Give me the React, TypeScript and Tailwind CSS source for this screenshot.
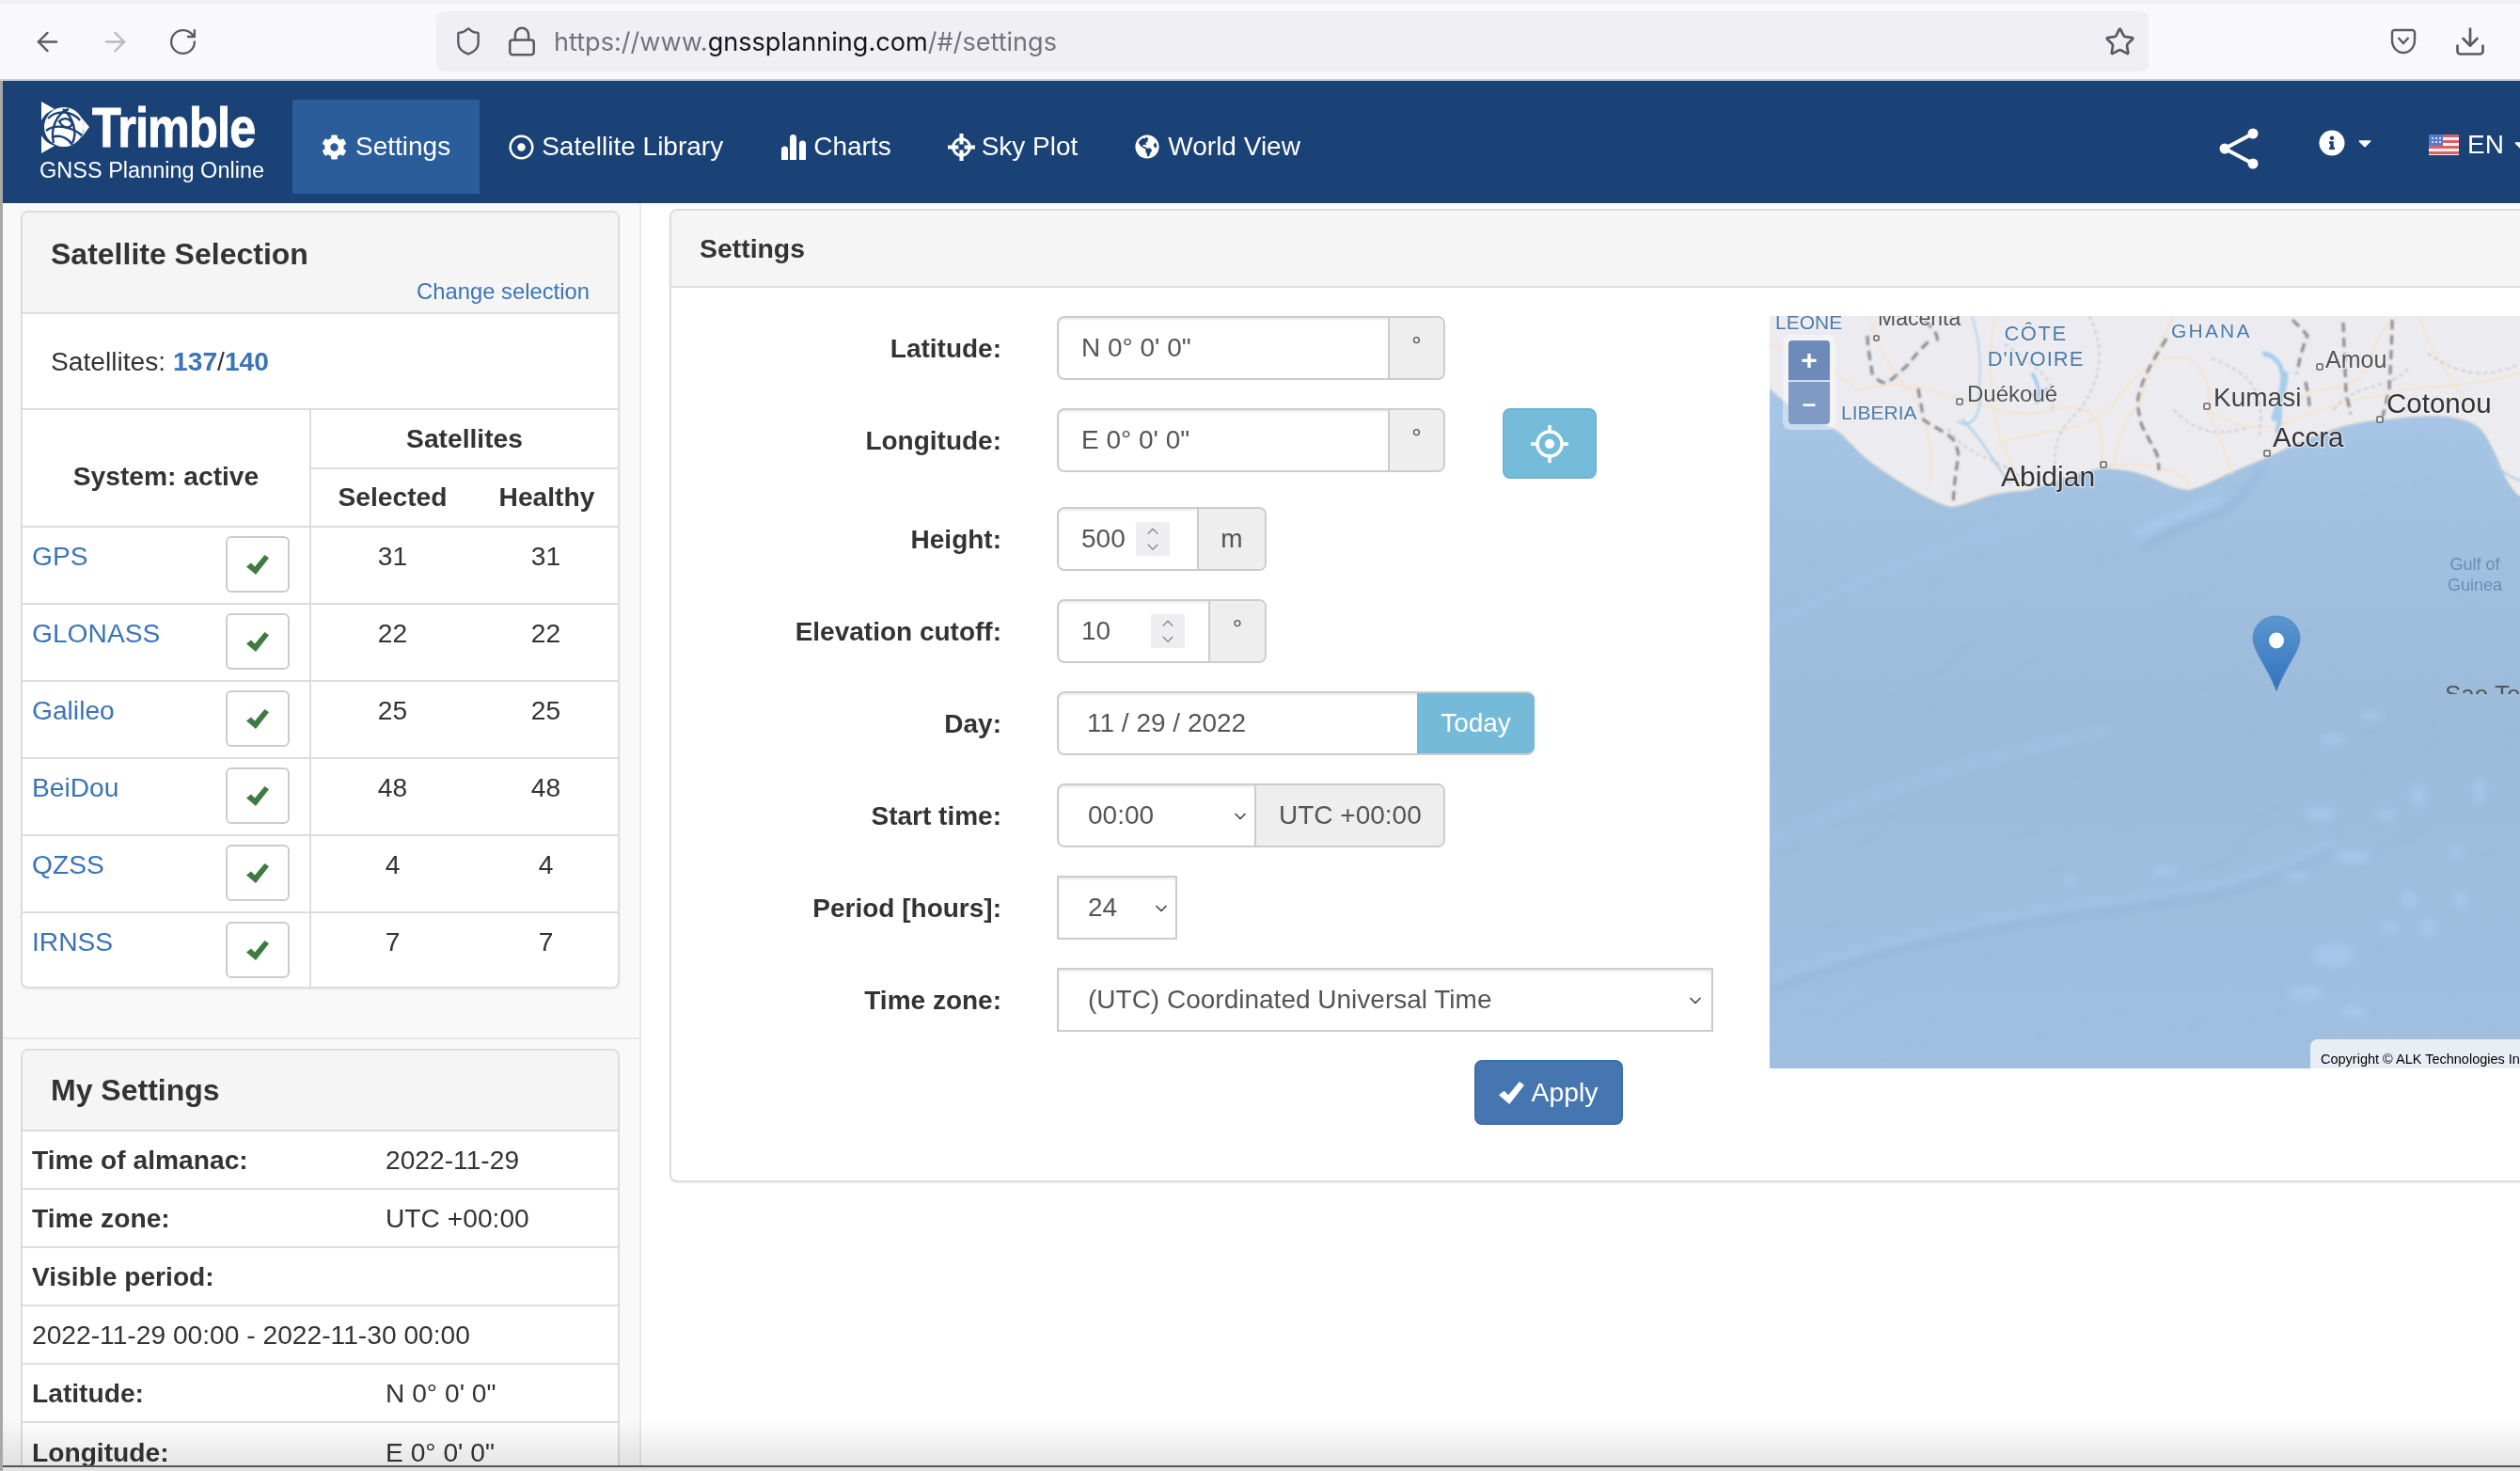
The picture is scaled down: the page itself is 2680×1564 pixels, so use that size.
import React from 'react';
import { ArrowLeft, ArrowRight, RotateCw, Shield, Lock, Star, Download, ChevronUp, ChevronDown } from 'lucide-react';
import { FaCog, FaRegDotCircle, FaGlobeAmericas, FaInfoCircle, FaCaretDown } from 'react-icons/fa';

const systems = [
  { name: 'GPS', selected: 31, healthy: 31 },
  { name: 'GLONASS', selected: 22, healthy: 22 },
  { name: 'Galileo', selected: 25, healthy: 25 },
  { name: 'BeiDou', selected: 48, healthy: 48 },
  { name: 'QZSS', selected: 4, healthy: 4 },
  { name: 'IRNSS', selected: 7, healthy: 7 },
];

const mySettings: { label?: string; value: string; full?: boolean }[] = [
  { label: 'Time of almanac:', value: '2022-11-29' },
  { label: 'Time zone:', value: 'UTC +00:00' },
  { label: 'Visible period:', value: '' },
  { value: '2022-11-29 00:00 - 2022-11-30 00:00', full: true },
  { label: 'Latitude:', value: 'N 0° 0\' 0"' },
  { label: 'Longitude:', value: 'E 0° 0\' 0"' },
];

const ChartsIcon = () => (
  <svg width="27" height="27" viewBox="0 0 27 27" fill="white">
    <path d="M0 16a3.5 3.5 0 0 1 7 0v11H0zM9 3.5a3.5 3.5 0 0 1 7 0V27H9zM19 10a3.5 3.5 0 0 1 7 0v17h-7z" />
  </svg>
);

const SkyPlotIcon = () => (
  <svg width="29" height="29" viewBox="0 0 28 28" fill="none" stroke="white" className="shrink-0">
    <circle cx="14" cy="14" r="8.5" strokeWidth="3" />
    <path d="M14 0v11M14 17v11M0 14h11M17 14h11" strokeWidth="4" />
  </svg>
);

const CheckMark = ({ className, width, height }: { className: string; width: number; height: number }) => (
  <svg width={width} height={height} viewBox="0 0 24 21" preserveAspectRatio="none" className={className} fill="currentColor">
    <path d="M0 12.5 L5 8.5 L9 12.5 L19.5 0 L24 3.2 L10 21 Z" />
  </svg>
);

const TrimbleMark = () => (
  <svg width="54" height="56" viewBox="0 0 54 56" className="shrink-0">
    <path d="M1 0 L15 8 A24 24 0 0 0 1 20 Z M52 27 L42 15 A22 22 0 0 1 43 39 Z M1 55 L1 36 A24 24 0 0 0 15 47 Z" fill="white" />
    <circle cx="25" cy="27" r="21" fill="white" />
    <g fill="none" stroke="#1a4276" strokeWidth="2.4">
      <path d="M8 18 C18 8 34 10 42 20" />
      <path d="M6 31 C16 23 34 27 44 36" />
      <path d="M14 44 C10 28 18 12 30 8" />
      <path d="M34 44 C40 32 34 16 24 8" />
      <path d="M12 38 C22 34 30 40 34 46" />
      <path d="M20 21 C25 16 32 18 34 24 C30 30 24 28 20 21 Z" />
    </g>
  </svg>
);

const UsFlag = () => (
  <svg width="32" height="22" viewBox="0 0 32 22" className="shrink-0">
    <rect width="32" height="22" fill="#f4f1f2" />
    <g fill="#dd5f5f">
      <rect width="32" height="3" />
      <rect y="6" width="32" height="3" />
      <rect y="12" width="32" height="3" />
      <rect y="18" width="32" height="3" />
    </g>
    <rect width="15" height="12" fill="#5a77d0" />
    <g fill="#d6def5">
      <rect x="3" y="3" width="2" height="2" />
      <rect x="7" y="3" width="2" height="2" />
      <rect x="11" y="3" width="2" height="2" />
      <rect x="3" y="7" width="2" height="2" />
      <rect x="7" y="7" width="2" height="2" />
      <rect x="11" y="7" width="2" height="2" />
    </g>
  </svg>
);

const Spinner = ({ className }: { className: string }) => (
  <div className={`flex flex-col items-center justify-center w-9 h-9 bg-[#eeeef1] text-[#8f8f9d] shrink-0 ${className}`}>
    <ChevronUp size={20} strokeWidth={1.8} className="-mb-[3px]" />
    <ChevronDown size={20} strokeWidth={1.8} />
  </div>
);

const Addon = ({ children, className }: { children: React.ReactNode; className: string }) => (
  <div className={`flex bg-[#eeeeee] border-l-2 border-[#cccccc] ${className}`}>{children}</div>
);

const FormRow = ({ label, children }: { label: string; children: React.ReactNode }) => (
  <div className="flex items-start mb-[30px]">
    <div className="w-[351px] h-[68px] pt-[2px] flex items-center justify-end font-bold text-[#333] text-[28px]">{label}</div>
    <div className="ml-[59px]">{children}</div>
  </div>
);

const inputBox = 'flex h-[68px] border-2 border-[#cccccc] rounded-lg bg-white text-[#555] text-[28px] overflow-hidden shadow-[inset_0_2px_2px_rgba(0,0,0,0.08)]';

const MapLabel = ({ x, y, size, color = '#333', anchor = 'start', spacing = 0, children }: { x: number; y: number; size: number; color?: string; anchor?: 'start' | 'middle'; spacing?: number; children: string }) => (
  <text x={x} y={y} fontSize={size} fill={color} textAnchor={anchor} letterSpacing={spacing} stroke="rgba(240,240,245,0.7)" strokeWidth="2.5" paintOrder="stroke">{children}</text>
);

const coast = 'M0 76 C15 90 28 100 40 107 C55 112 64 116 76 124 C92 140 102 152 117 161 C132 172 146 180 158 187 C172 194 185 202 195 202 C208 200 220 194 231 191 C246 186 262 186 277 184 C302 176 330 164 355 161 C372 162 388 164 401 169 C416 174 430 184 445 184 C458 182 468 176 479 171 C498 162 514 156 530 149 C558 136 582 124 608 117 C626 112 642 110 659 109 C682 106 706 104 727 107 C742 110 752 114 758 121 C770 138 776 154 783 171 C788 180 792 186 798 191';

// light seamount patches in the lower right of the ocean
const seamounts = [
  [600, 450, 14, 6], [640, 425, 12, 5], [585, 530, 16, 7], [620, 575, 20, 7], [560, 595, 14, 5],
  [655, 530, 10, 6], [690, 510, 8, 12], [755, 505, 6, 14], [730, 570, 8, 6], [680, 620, 9, 8],
  [700, 650, 8, 10], [600, 680, 22, 12], [570, 720, 18, 8], [620, 740, 14, 7], [660, 650, 10, 6],
  [735, 620, 7, 10], [420, 590, 14, 5], [320, 600, 8, 5],
];

const MapCanvas = () => (
  <svg width="798" height="800" viewBox="0 0 798 800" className="absolute inset-0">
    <defs>
      <linearGradient id="sea" x1="0" y1="0" x2="0" y2="1">
        <stop offset="0" stopColor="#a0c4ea" />
        <stop offset="0.3" stopColor="#94b7db" />
        <stop offset="0.55" stopColor="#90b3d7" />
        <stop offset="1" stopColor="#93b7dd" />
      </linearGradient>
      <linearGradient id="pin" x1="0" y1="0" x2="0" y2="1">
        <stop offset="0" stopColor="#5a96d0" />
        <stop offset="1" stopColor="#3372bd" />
      </linearGradient>
      <filter id="relief" x="0" y="0" width="100%" height="100%">
        <feTurbulence type="fractalNoise" baseFrequency="0.006 0.016" numOctaves="4" seed="11" />
        <feDiffuseLighting surfaceScale="5" lightingColor="white" diffuseConstant="1.1">
          <feDistantLight azimuth="225" elevation="65" />
        </feDiffuseLighting>
      </filter>
      <filter id="soft"><feGaussianBlur stdDeviation="0.8" /></filter>
      <filter id="softer"><feGaussianBlur stdDeviation="4" /></filter>
      <clipPath id="saoClip"><rect x="700" y="380" width="98" height="22" /></clipPath>
      <clipPath id="seaClip"><path d={`${coast} L798 800 L0 800 Z`} /></clipPath>
    </defs>
    <rect width="798" height="800" fill="url(#sea)" />
    <g clipPath="url(#seaClip)">
      <rect x="-300" y="-300" width="1400" height="1400" filter="url(#relief)" opacity="0.12" transform="rotate(-22 399 400)" style={{ mixBlendMode: 'multiply' }} />
      <g filter="url(#softer)" fill="none" strokeLinecap="round" opacity="0.75">
        <path d="M401 244 C430 226 460 216 484 207 C500 196 515 178 525 160" stroke="#7f9fc4" strokeWidth="2.5" />
        <path d="M392 232 C425 214 455 204 476 196" stroke="#a9cbee" strokeWidth="10" />
        <path d="M0 717 C100 680 210 655 308 641 C380 630 430 625 484 614 C530 600 565 588 597 571" stroke="#86a7cb" strokeWidth="2.5" />
        <path d="M0 705 C100 668 210 643 308 628 C380 618 430 612 484 602 C530 588 565 576 597 558" stroke="#a5c7ea" strokeWidth="5" />
        <path d="M0 560 C120 500 220 470 360 440 M0 330 C90 280 190 240 270 225" stroke="#a2c4e8" strokeWidth="6" />
      </g>
      <g filter="url(#softer)" fill="#a9cbef" opacity="0.7">
        {seamounts.map(([cx, cy, rx, ry]) => (
          <ellipse key={`${cx}-${cy}`} cx={cx} cy={cy} rx={rx} ry={ry} />
        ))}
      </g>
    </g>
    <path d={`${coast} L798 0 L0 0 Z`} fill="#ecebf0" />
    <g filter="url(#soft)">
      <path d={coast} fill="none" stroke="#f2e6d8" strokeWidth="2" />
      <g fill="none" stroke="#f6e3c9" strokeWidth="2">
        <path d="M0 30 C40 40 70 58 95 80 C120 70 150 70 190 85 C240 100 270 110 300 100 C340 90 360 105 352 160" />
        <path d="M105 0 C118 40 130 60 150 80 C170 110 175 150 170 180" />
        <path d="M240 0 C230 50 235 90 245 130 C260 160 262 170 268 184" />
        <path d="M245 135 C290 120 330 125 360 100 C390 60 410 40 445 45 C470 60 470 95 465 100 C490 115 510 120 540 118" />
        <path d="M355 160 C410 150 450 170 445 184 M465 100 C480 130 490 160 492 168" />
        <path d="M540 118 C580 100 610 90 650 85 C690 70 740 80 798 60 M530 148 C536 130 540 125 545 112" />
        <path d="M690 0 C700 30 720 60 745 100 M430 0 C412 30 400 60 395 90 C378 110 370 130 365 160" />
        <path d="M560 90 C590 70 620 85 640 50 C640 30 650 15 670 0" />
      </g>
      <g fill="none" stroke="#b2b2b6" strokeWidth="1.2" strokeDasharray="4 4">
        <path d="M340 0 C360 40 350 80 320 110 C300 130 300 160 310 178" />
        <path d="M250 30 C280 50 310 70 300 100 M470 45 C510 60 530 80 520 130" />
        <path d="M700 40 C730 60 760 70 798 50 M600 100 C620 70 660 80 680 55" />
        <path d="M430 100 C450 120 470 130 510 118 M190 120 C210 150 240 150 265 170" />
      </g>
      <g fill="none" stroke="#85858a" strokeWidth="3" strokeDasharray="10 6">
        <path d="M104 21 C104 35 108 50 109 61 C114 68 120 72 125 71 C132 66 140 58 148 51 C154 42 162 34 169 27" />
        <path d="M158 77 C160 90 162 100 164 111 C175 118 188 124 195 131 C200 140 202 148 200 154 C197 170 196 185 195 201" />
        <path d="M422 24 C412 40 405 52 401 61 C394 76 392 84 391 94 C393 104 394 110 396 117 C403 130 408 140 412 147 C413 154 414 160 414 164" />
        <path d="M556 4 C562 10 568 16 572 21 C566 35 563 48 561 61 M570 70 C572 80 574 90 574 96" />
        <path d="M610 7 C611 35 612 60 613 81 C615 92 617 98 618 104" />
        <path d="M662 4 C662 30 660 55 659 77 C656 90 654 98 652 107" />
        <path d="M165 5 C175 14 180 20 178 30" />
      </g>
      <g fill="none" stroke="#a8cdea" strokeLinecap="round">
        <path d="M526 40 C545 45 548 60 544 80 C540 95 545 105 540 122" strokeWidth="5" />
        <path d="M548 62 C548 80 540 95 537 108" strokeWidth="7" />
        <path d="M280 62 C285 72 288 80 284 92 M295 78 C288 82 282 84 278 84" strokeWidth="4" />
        <path d="M224 90 C222 110 212 120 200 112 M205 110 C225 130 235 150 255 178" strokeWidth="2" />
        <path d="M215 0 C225 30 225 55 222 90" strokeWidth="1.5" />
        <path d="M768 150 C775 165 785 170 798 175" strokeWidth="2" />
      </g>
    </g>
    <g fontFamily="'Liberation Sans', Arial, sans-serif">
      <MapLabel x={6} y={14} size={21} color="#4d7da6">LEONE</MapLabel>
      <MapLabel x={115} y={10} size={23} color="#555">Macenta</MapLabel>
      <MapLabel x={283} y={26} size={22} color="#4d7da6" anchor="middle" spacing={1.5}>CÔTE</MapLabel>
      <MapLabel x={283} y={53} size={22} color="#4d7da6" anchor="middle" spacing={1}>D'IVOIRE</MapLabel>
      <MapLabel x={427} y={23} size={21} color="#4d7da6" spacing={2.2}>GHANA</MapLabel>
      <MapLabel x={76} y={110} size={21} color="#4d7da6">LIBERIA</MapLabel>
      <MapLabel x={591} y={55} size={25} color="#555">Amou</MapLabel>
      <MapLabel x={210} y={91} size={24} color="#555">Duékoué</MapLabel>
      <MapLabel x={472} y={96} size={28} color="#444">Kumasi</MapLabel>
      <MapLabel x={656} y={103} size={29.5}>Cotonou</MapLabel>
      <MapLabel x={535} y={139} size={29.5}>Accra</MapLabel>
      <MapLabel x={246} y={181} size={30}>Abidjan</MapLabel>
      <text x={750} y={270} fontSize={18} fill="#6f8db5" textAnchor="middle">Gulf of</text>
      <text x={750} y={292} fontSize={18} fill="#6f8db5" textAnchor="middle">Guinea</text>
      <text x={718} y={411} fontSize={26} fill="#555" clipPath="url(#saoClip)">Sao Tome</text>
    </g>
    <g fill="#f2f2f2" stroke="#666" strokeWidth="1.6">
      <rect x="111" y="21" width="5" height="5" rx="1" />
      <rect x="582" y="51" width="6" height="6" rx="1" />
      <rect x="199" y="88" width="6" height="6" rx="1" />
      <rect x="462" y="93" width="6" height="6" rx="1" />
      <rect x="646" y="107" width="6" height="6" rx="1" />
      <rect x="526" y="143" width="6" height="6" rx="1" />
      <rect x="352" y="155" width="6" height="6" rx="1" />
    </g>
    <path d="M539 399 C530 374 514 356 514 343 C514 329 525 319 539 319 C553 319 564 329 564 343 C564 356 548 374 539 399 Z" fill="url(#pin)" stroke="#5b8fc2" strokeWidth="1" />
    <ellipse cx="539" cy="345" rx="8" ry="8.5" fill="white" />
  </svg>
);

const App: React.FC = () => {
  return (
    <div className="relative w-[2680px] h-[1564px] overflow-hidden bg-white flex flex-col font-['Liberation_Sans',Arial,sans-serif] text-[28.2px] text-[#333]">
      {/* Browser toolbar */}
      <div className="h-[86px] shrink-0 pt-1 bg-[#f0f0f4]">
        <div className="h-[80px] bg-[#f9f9fb] flex items-center pl-[34px]">
          <ArrowLeft size={33} strokeWidth={1.7} className="text-[#5b5b66]" />
          <ArrowRight size={33} strokeWidth={1.7} className="ml-[39px] text-[#b9b9c0]" />
          <RotateCw size={33} strokeWidth={1.7} className="ml-[39px] text-[#5b5b66]" />
          <div className="ml-[253px] w-[1821px] h-[64px] rounded-lg bg-[#f0f0f4] flex items-center pl-[18px] font-['Inter',sans-serif] text-[27.1px]">
            <Shield size={32} strokeWidth={1.8} className="text-[#5b5b66]" />
            <Lock size={34} strokeWidth={1.8} className="ml-[24px] text-[#5b5b66]" />
            <div className="ml-[17px] mt-[3px] text-[#73737c]">https://www.<span className="text-[#15141a]">gnssplanning.com</span>/#/settings</div>
            <Star size={33} strokeWidth={2} className="ml-auto mr-[14px] text-[#5b5b66]" />
          </div>
          <svg width="28" height="28" viewBox="0 0 28 28" fill="none" stroke="#5b5b66" strokeWidth="2.4" className="ml-[257px]">
            <path d="M2 4.5 A2.5 2.5 0 0 1 4.5 2 H23.5 A2.5 2.5 0 0 1 26 4.5 V13 A12 13 0 0 1 2 13 Z" />
            <path d="M8.5 10 L14 16 L19.5 10" />
          </svg>
          <Download size={36} strokeWidth={1.8} className="ml-[39px] text-[#5b5b66]" />
        </div>
        <div className="h-0.5 bg-[#cfcfd6]" />
      </div>

      {/* Navbar */}
      <nav className="h-[130px] shrink-0 bg-[#1a4276] flex items-center pl-[43px] pt-[10px] text-white text-[28px]">
        <div className="w-[268px] shrink-0 -mt-[13px]">
          <div className="flex items-center h-[62px]">
            <TrimbleMark />
            <div className="ml-[1px] font-bold text-[60px] leading-none scale-x-[0.84] origin-left tracking-[-1px] [-webkit-text-stroke:1px_white]">Trimble</div>
          </div>
          <div className="text-[23.5px] leading-[28px] whitespace-nowrap -ml-[1px]">GNSS Planning Online</div>
        </div>
        <div className="flex items-center h-[100px] px-[31px] bg-[#2a5d99] gap-[9px]">
          <FaCog size={27} /><span>Settings</span>
        </div>
        <div className="flex items-center h-[100px] px-[31px] gap-[8px]">
          <FaRegDotCircle size={27} /><span>Satellite Library</span>
        </div>
        <div className="flex items-center h-[100px] px-[31px] gap-[7px]">
          <ChartsIcon /><span>Charts</span>
        </div>
        <div className="flex items-center h-[100px] pl-[29px] pr-[31px] gap-[7px]">
          <SkyPlotIcon /><span>Sky Plot</span>
        </div>
        <div className="flex items-center h-[100px] pl-[30px] pr-[31px] gap-[9px]">
          <FaGlobeAmericas size={26} /><span>World View</span>
        </div>
        <svg width="44" height="44" viewBox="0 0 44 44" fill="white" stroke="white" strokeWidth="4" className="ml-auto mt-1">
          <path d="M37 6 L7 22 L37 38" fill="none" />
          <circle cx="37" cy="6" r="3.5" /><circle cx="7" cy="22" r="3.5" /><circle cx="37" cy="38" r="3.5" />
        </svg>
        <div className="ml-[63px] flex items-center -mt-[8px]">
          <FaInfoCircle size={28} />
          <FaCaretDown size={22} className="ml-[10px]" />
        </div>
        <div className="ml-[57px] flex items-center gap-[9px] -mt-[5px] shrink-0 w-[97px]">
          <UsFlag />
          <span>EN</span>
          <FaCaretDown size={22} className="shrink-0 -ml-[2px]" />
        </div>
      </nav>

      <div className="flex flex-1 min-h-0">
        {/* Left column */}
        <aside className="w-[682px] shrink-0 bg-[#f9f9f9] border-r-2 border-[#e8e8e8]">
          <div className="pt-2 pl-[22px] pr-[21px] pb-[52px] border-b-2 border-[#e8e8e8]">
            <div className="border-2 border-[#dddddd] rounded-lg bg-white overflow-hidden shadow-[0_1px_2px_rgba(0,0,0,0.08)]">
              <div className="h-[108px] bg-[#f5f5f5] border-b-2 border-[#dddddd] px-[30px] relative">
                <div className="pt-[26px] text-[32px] font-bold leading-[36px]">Satellite Selection</div>
                <div className="absolute right-[30px] top-[70px] text-[23.8px] leading-[28px] text-[#3b74b6]">Change selection</div>
              </div>
              <div className="h-[102px] flex items-center px-[30px] border-b-2 border-[#dddddd]">
                Satellites:&nbsp;<b className="text-[#3b74b6]">137</b>/<b className="text-[#3b74b6]">140</b>
              </div>
              <table className="w-full border-collapse table-fixed">
                <colgroup>
                  <col className="w-[306px]" />
                  <col className="w-[174px]" />
                  <col />
                </colgroup>
                <thead>
                  <tr className="h-[62px]">
                    <th rowSpan={2} className="border-r-2 border-b-2 border-[#dddddd] font-bold pt-[18px]">System: active</th>
                    <th colSpan={2} className="border-b-2 border-[#dddddd] font-bold">Satellites</th>
                  </tr>
                  <tr className="h-[62px]">
                    <th className="border-b-2 border-[#dddddd] font-bold pb-[2px]">Selected</th>
                    <th className="border-b-2 border-[#dddddd] font-bold pl-[2px] pb-[2px]">Healthy</th>
                  </tr>
                </thead>
                <tbody>
                  {systems.map((s, i) => (
                    <tr key={s.name} className={i < systems.length - 1 ? 'h-[82px] border-b-2 border-[#dddddd]' : 'h-[79px]'}>
                      <td className="border-r-2 border-[#dddddd] align-top p-0">
                        <div className="flex justify-between pl-[10px] pr-[21px]">
                          <span className="text-[#3b74b6] pt-[13px] leading-[34px]">{s.name}</span>
                          <div className="mt-[9px] w-[68px] h-[60px] border-2 border-[#cccccc] rounded-md bg-white flex items-center justify-center">
                            <CheckMark width={24} height={21} className="text-[#3e7b41]" />
                          </div>
                        </div>
                      </td>
                      <td className="align-top text-center pt-[13px] leading-[34px]">{s.selected}</td>
                      <td className="align-top text-center pt-[13px] leading-[34px]">{s.healthy}</td>
                    </tr>
                  ))}
                </tbody>
              </table>
            </div>
          </div>
          <div className="pt-[10px] pl-[22px] pr-[21px]">
            <div className="border-2 border-b-0 border-[#dddddd] rounded-t-lg bg-white overflow-hidden">
              <div className="h-[86px] bg-[#f5f5f5] border-b-2 border-[#dddddd] px-[30px] flex items-center text-[32px] font-bold">My Settings</div>
              {mySettings.map((r, i) => (
                <div key={i} className={`h-[62px] flex items-center pl-[10px] ${i < mySettings.length - 1 ? 'border-b-2 border-[#dddddd]' : ''}`}>
                  {r.full ? (
                    <span>{r.value}</span>
                  ) : (
                    <>
                      <b className="w-[376px] shrink-0">{r.label}</b>
                      <span>{r.value}</span>
                    </>
                  )}
                </div>
              ))}
            </div>
          </div>
        </aside>

        {/* Settings panel */}
        <main className="flex-1 min-w-0 pl-[30px] pt-[6px]">
          <div className="w-[2200px] h-[1035px] border-2 border-[#dddddd] rounded-lg bg-white shadow-[0_1px_2px_rgba(0,0,0,0.08)]">
            <div className="h-[82px] bg-[#f5f5f5] border-b-2 border-[#dddddd] rounded-t-lg flex items-center pl-[30px] font-bold text-[28.4px]">Settings</div>
            <div className="flex pt-[30px]">
              <div className="w-[1168px] shrink-0">
                <FormRow label="Latitude:">
                  <div className={`${inputBox} w-[413px]`}>
                    <div className="w-[350px] flex items-center pl-[24px]">N 0° 0' 0"</div>
                    <Addon className="flex-1 justify-center pt-[10px] text-[26px]">°</Addon>
                  </div>
                </FormRow>
                <FormRow label="Longitude:">
                  <div className="flex items-start">
                    <div className={`${inputBox} w-[413px]`}>
                      <div className="w-[350px] flex items-center pl-[24px]">E 0° 0' 0"</div>
                      <Addon className="flex-1 justify-center pt-[10px] text-[26px]">°</Addon>
                    </div>
                    <button className="ml-[61px] w-[100px] h-[75px] rounded-lg bg-[#74bcda] border-2 border-[#6bb4d3] flex items-center justify-center">
                      <svg width="42" height="42" viewBox="0 0 42 42" fill="none" stroke="white" strokeWidth="3.5">
                        <circle cx="21" cy="21" r="13" />
                        <circle cx="21" cy="21" r="5" fill="white" stroke="none" />
                        <path d="M21 1v8M21 33v8M1 21h8M33 21h8" />
                      </svg>
                    </button>
                  </div>
                </FormRow>
                <FormRow label="Height:">
                  <div className={`${inputBox} w-[223px]`}>
                    <div className="w-[147px] flex items-center pl-[24px]"><span>500</span><Spinner className="ml-[11px]" /></div>
                    <Addon className="flex-1 items-center justify-center">m</Addon>
                  </div>
                </FormRow>
                <FormRow label="Elevation cutoff:">
                  <div className={`${inputBox} w-[223px]`}>
                    <div className="w-[159px] flex items-center pl-[24px]"><span>10</span><Spinner className="ml-[43px]" /></div>
                    <Addon className="flex-1 justify-center pt-[10px] text-[26px]">°</Addon>
                  </div>
                </FormRow>
                <FormRow label="Day:">
                  <div className={`${inputBox} w-[508px] border-r-0`}>
                    <div className="w-[381px] flex items-center pl-[30px]">11 / 29 / 2022</div>
                    <div className="flex-1 -my-[2px] bg-[#75bbd9] text-white flex items-center justify-center">Today</div>
                  </div>
                </FormRow>
                <FormRow label="Start time:">
                  <div className={`${inputBox} w-[413px]`}>
                    <div className="w-[208px] flex items-center pl-[31px] relative">00:00
                      <ChevronDown size={20} strokeWidth={2} className="absolute right-[5px] top-[23px] text-[#444]" />
                    </div>
                    <Addon className="flex-1 items-center pl-[24px]">UTC +00:00</Addon>
                  </div>
                </FormRow>
                <FormRow label="Period [hours]:">
                  <div className="relative flex items-center w-[128px] h-[68px] border-2 border-[#cccccc] bg-white text-[#555] text-[28px] pl-[31px] shadow-[inset_0_2px_2px_rgba(0,0,0,0.08)]">24
                    <ChevronDown size={20} strokeWidth={2} className="absolute right-[5px] top-[23px] text-[#444]" />
                  </div>
                </FormRow>
                <FormRow label="Time zone:">
                  <div className="relative flex items-center w-[698px] h-[68px] border-2 border-[#cccccc] bg-white text-[#555] text-[28px] pl-[31px] shadow-[inset_0_2px_2px_rgba(0,0,0,0.08)]">(UTC) Coordinated Universal Time
                    <ChevronDown size={20} strokeWidth={2} className="absolute right-[7px] top-[23px] text-[#444]" />
                  </div>
                </FormRow>
                <div className="pl-[854px] mt-[1px]">
                  <button className="w-[158px] h-[69px] rounded-lg bg-[#4676b0] border-2 border-[#3f6ea8] text-white flex items-center justify-center gap-[7px] text-[28.4px]">
                    <CheckMark width={27} height={24} className="text-white" /><span>Apply</span>
                  </button>
                </div>
              </div>
              <div className="relative w-[798px] h-[800px] overflow-hidden shrink-0">
                <MapCanvas />
                <div className="absolute left-[14px] top-[20px] w-[56px] rounded-lg bg-white/40 p-[6px]">
                  <div className="h-[44px] rounded-t bg-[#6d8ab8] border-b-2 border-white/70 flex items-center justify-center text-white text-[30px] font-bold leading-none">+</div>
                  <div className="h-[45px] rounded-b bg-[#7f9ac4] flex items-center justify-center text-white text-[26px] font-bold leading-none">–</div>
                </div>
                <div className="absolute right-0 bottom-0 w-[223px] h-[31px] overflow-hidden whitespace-nowrap rounded-tl-lg bg-[#e9eef5] pl-[11px] pt-[11px] text-[14.5px] leading-[20px] text-black">Copyright © ALK Technologies Inc</div>
              </div>
            </div>
          </div>
        </main>
      </div>

      {/* Window bottom edge */}
      <div className="absolute left-0 right-0 bottom-[6px] h-[50px] bg-gradient-to-b from-transparent to-black/10 pointer-events-none" />
      <div className="absolute left-0 right-0 bottom-0 h-[6px] bg-[#e2e2e2] border-t-2 border-[#555]" />
      <div className="absolute left-0 top-[86px] bottom-0 w-[3px] bg-[#a8a8a8]" />
    </div>
  );
};

export default App;
